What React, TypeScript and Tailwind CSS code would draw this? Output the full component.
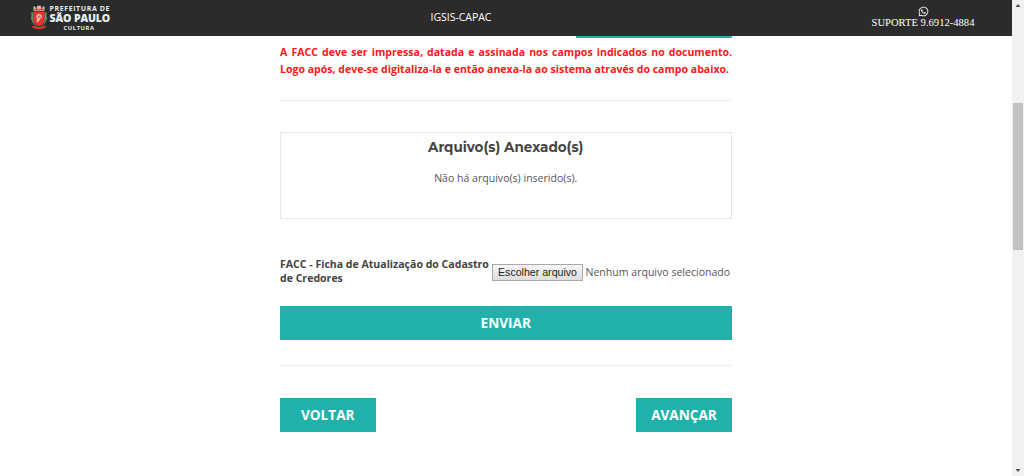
import React from "react";
import { FaWhatsapp } from "react-icons/fa";

function Crest() {
  return (
    <svg viewBox="0 0 18 25" className="h-[25px] w-[18px] shrink-0">
      <path d="M3.500 1.500h2v1.400h1.600V.8h3.800v2.100h1.600V1.500h2v4.200h-11z" fill="#d9c0b8" />
      <path d="M4 4.300h10M6.500 2v3M11.500 2v3" stroke="#c93531" strokeWidth="0.9" />
      <path d="M1 8c1-1 2-1 2.500 0v8c0 3 2 5 5.500 6.500 3.500-1.500 5.500-3.500 5.500-6.500V8c.5-1 1.500-1 2.500 0-.8 2-.5 3.500 0 5-.8 4-3 8-8 10.200C4 21 1.800 17 1 13c.5-1.500.8-3 0-5z" fill="#5a9663" />
      <path d="M3.500 6.500h11v9c0 3-2.500 4.500-5.500 5.800-3-1.300-5.500-2.800-5.500-5.800z" fill="#e9312e" />
      <path d="M6 11l2.500-2.300L11.500 10l.5 2.500-2 1.500-1 2.500-2.500.8.500-3z" fill="#f0bcb4" />
      <path d="M7.500 11l2 1-1.500 1.500M9.500 10.500l1 2" stroke="#d73834" strokeWidth="0.8" fill="none" />
      <path d="M3 20.500q6 3.500 12 0l1 2q-7 3.500-14 0z" fill="#d9322f" />
    </svg>
  );
}

function Header() {
  return (
    <header className="grid h-9 shrink-0 grid-cols-[306px_1fr_306px] bg-[#2b2b2b] text-white">
      <div className="flex items-start gap-[2px] pl-[29.500px] pt-[5px]">
        <Crest />
        <div className="flex flex-col whitespace-nowrap font-['Open_Sans',sans-serif] font-bold text-[#e4eef0]">
          <span className="h-[8px] text-[7px] leading-[8px] tracking-[0.6px]">PREFEITURA DE</span>
          <span className="h-[11px] text-[10.500px] font-extrabold leading-[11px] tracking-[-0.1px]">SÃO PAULO</span>
          <span className="pl-[14px] pt-px text-[5.800px] leading-[7px] tracking-[0.6px]">CULTURA</span>
        </div>
      </div>
      <div className="pl-[124.500px] pt-[9px] font-['Open_Sans',sans-serif] text-[10.550px] font-medium leading-4 tracking-[-0.05px]">IGSIS-CAPAC</div>
      <div className="flex flex-col items-center pl-[128px] pt-[6px] font-['Liberation_Serif',serif]">
        <FaWhatsapp className="size-[11px]" />
        <span className="whitespace-nowrap text-[10.600px] leading-[11px]">SUPORTE 9.6912-4884</span>
      </div>
    </header>
  );
}

function Scrollbar() {
  return (
    <div className="flex h-[476px] w-3 shrink-0 flex-col items-center bg-[#f1f1f1]">
      <svg viewBox="0 0 12 12" className="size-3"><path d="M3.500 7L6 4l2.500 3z" fill="#505050" /></svg>
      <div className="mt-[91px] h-[147px] w-[10px] bg-[#c1c1c1]" />
      <svg viewBox="0 0 12 12" className="mt-auto size-3"><path d="M3.500 5L6 8l2.500-3z" fill="#505050" /></svg>
    </div>
  );
}

export default function App() {
  return (
    <div className="flex h-[476px] overflow-hidden bg-white">
      <div className="flex min-w-0 flex-1 flex-col">
        <Header />
        <main className="ml-[279.500px] flex w-[452.500px] flex-col font-['Open_Sans',sans-serif] text-[10.550px] text-[#555]">
          <div className="ml-auto h-[2px] w-[156px] bg-[#20b2aa]" />
          <div className="mt-[6px] h-[34px] whitespace-nowrap pl-[0.500px] font-bold leading-[17px] text-[#ff1717]">
            <p className="[text-align-last:justify]">A FACC deve ser impressa, datada e assinada nos campos indicados no documento.</p>
            <p>Logo após, deve-se digitaliza-la e então anexa-la ao sistema através do campo abaixo.</p>
          </div>
          <hr className="mt-[22px] border-[#eee]" />
          <section className="mt-[31px] h-[87px] border border-[#e6e6e6] pt-[6px] text-center">
            <h2 className="font-[Montserrat,sans-serif] text-[13.500px] font-bold leading-4 text-[#444]">Arquivo(s) Anexado(s)</h2>
            <p className="mt-[15px] leading-4">Não há arquivo(s) inserido(s).</p>
          </section>
          <div className="mt-[39px] flex h-7 items-center whitespace-nowrap">
            <label className="w-[212.500px] shrink-0 pb-[2px] pl-[0.500px] font-bold leading-[14px] text-[#444]">
              FACC - Ficha de Atualização do Cadastro<br />de Credores
            </label>
            <button className="h-[17px] w-[91px] shrink-0 border border-[#a9a9a9] bg-linear-to-b from-[#f6f6f6] to-[#dedede] font-['Liberation_Sans',sans-serif] text-[10.600px] leading-[15px] text-[#222]">Escolher arquivo</button>
            <span className="ml-[2.500px] pt-[2px]">Nenhum arquivo selecionado</span>
          </div>
          <button className="mt-5 h-[34px] bg-[#20b2aa] text-[13.600px] font-bold text-white">ENVIAR</button>
          <hr className="mt-[25px] border-[#eee]" />
          <div className="mt-8 flex justify-between text-[13.600px] font-bold text-white">
            <button className="h-[34px] w-[96.500px] bg-[#20b2aa]">VOLTAR</button>
            <button className="h-[34px] w-[96px] bg-[#20b2aa]">AVANÇAR</button>
          </div>
        </main>
      </div>
      <Scrollbar />
    </div>
  );
}
